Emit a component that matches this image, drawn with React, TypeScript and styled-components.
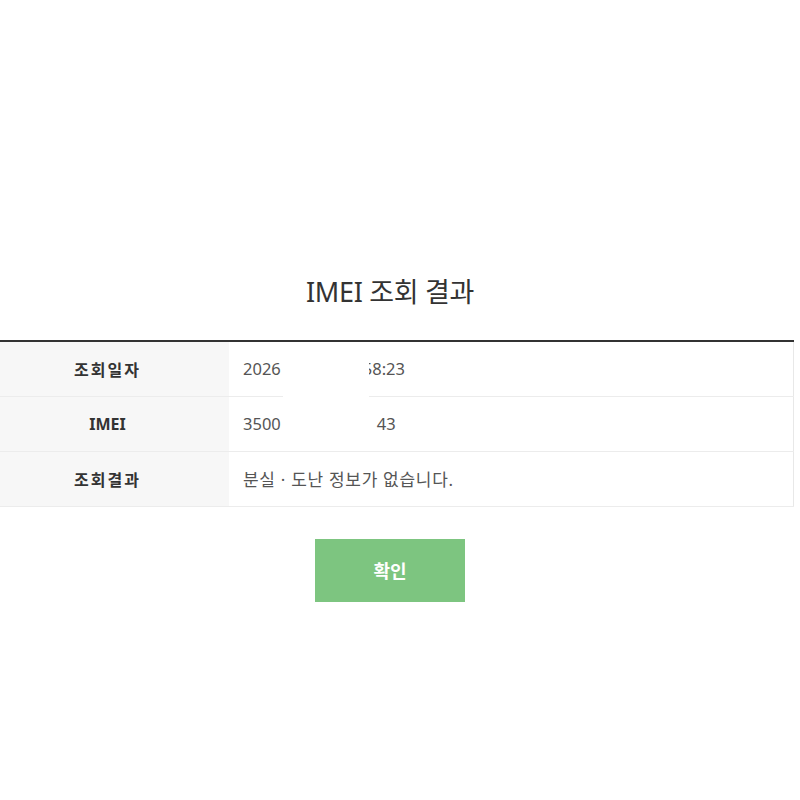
import styled, { createGlobalStyle } from "styled-components";

const GlobalStyle = createGlobalStyle`
  * { box-sizing: border-box; }
  body {
    margin: 0;
    background: #ffffff;
    font-family: "Noto Sans", "Noto Sans CJK KR", sans-serif;
    overflow: hidden;
  }
`;

const Page = styled.div`
  width: 780px;
  padding-top: 272px;
  display: flex;
  flex-direction: column;
  align-items: center;
`;

const Title = styled.h2`
  margin: 0 0 28px;
  font-size: 27px;
  font-weight: 400;
  color: #333;
  line-height: 40px;
  letter-spacing: -0.3px;
`;

const ResultTable = styled.table`
  position: relative;
  width: 808px;
  flex-shrink: 0;
  border-collapse: collapse;
  border-top: 2px solid #333;
  border-right: 1px solid #e8e8e8;
`;

const Row = styled.tr`
  height: 55px;
  border-bottom: 1px solid #ececec;
`;

const Label = styled.th<{ $hangul?: boolean }>`
  width: 243px;
  background: #f7f7f7;
  font-size: 16px;
  font-weight: 700;
  color: #333;
  text-align: center;
  padding: 0;
  letter-spacing: ${(p) => (p.$hangul ? "2px" : "0")};
`;

const Value = styled.td<{ $hangul?: boolean }>`
  padding: 0 0 0 14px;
  font-size: ${(p) => (p.$hangul ? "17px" : "16.5px")};
  letter-spacing: ${(p) => (p.$hangul ? "0.7px" : "0")};
  color: #555;
  text-align: left;
`;

const Gap = styled.span<{ $w: number }>`
  padding-left: ${(p) => p.$w}px;
`;

const Redact = styled.div`
  position: absolute;
  left: 297px;
  top: 12px;
  width: 86px;
  height: 50px;
  background: #fff;
`;

const ConfirmButton = styled.button`
  margin-top: 32px;
  width: 150px;
  height: 63px;
  border: none;
  background: #7dc580;
  color: #fff;
  font-family: inherit;
  font-size: 18px;
  font-weight: 700;
  cursor: pointer;
`;

export default function App() {
  return (
    <>
      <GlobalStyle />
      <Page>
        <Title>IMEI 조회 결과</Title>
        <ResultTable>
          <tbody>
            <Row>
              <Label $hangul>조회일자</Label>
              <Value>2026<Gap $w={82}>58:23</Gap></Value>
            </Row>
            <Row>
              <Label>IMEI</Label>
              <Value>3500<Gap $w={96}>43</Gap></Value>
            </Row>
            <Row>
              <Label $hangul>조회결과</Label>
              <Value $hangul>분실 · 도난 정보가 없습니다.</Value>
            </Row>
          </tbody>
          <Redact />
        </ResultTable>
        <ConfirmButton>확인</ConfirmButton>
      </Page>
    </>
  );
}
